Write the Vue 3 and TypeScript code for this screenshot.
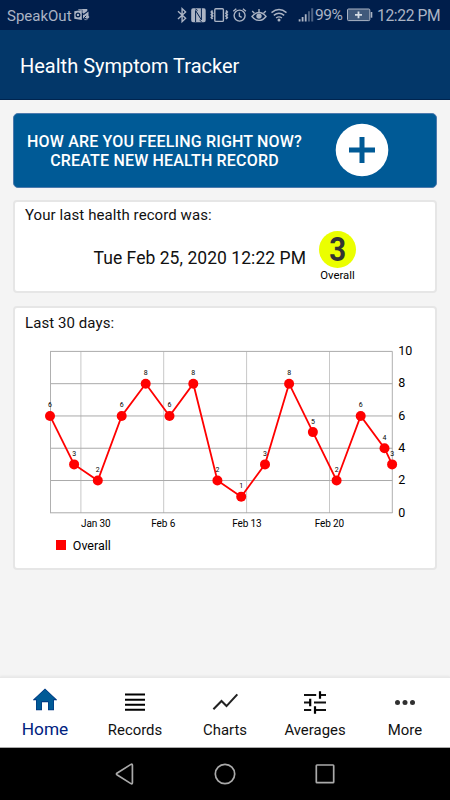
<script setup lang="ts">
interface Point { x: number; value: number }

const points: Point[] = [
  { x: 50, value: 6 }, { x: 74.1, value: 3 }, { x: 97.8, value: 2 }, { x: 121.7, value: 6 },
  { x: 145.7, value: 8 }, { x: 169.5, value: 6 }, { x: 193.3, value: 8 }, { x: 217.4, value: 2 },
  { x: 241.2, value: 1 }, { x: 265, value: 3 }, { x: 289.1, value: 8 }, { x: 312.9, value: 5 },
  { x: 336.6, value: 2 }, { x: 360.7, value: 6 }, { x: 384.5, value: 4 }, { x: 392.1, value: 3 },
]
const scaleY = (v: number): number => 512.8 - v * 16.14
const line = points.map((p) => `${p.x},${scaleY(p.value)}`).join(' ')
const levels = [0, 2, 4, 6, 8, 10]
const weeks = [
  { x: 80.9, labelX: 81, width: 29.5, label: 'Jan 30' },
  { x: 163.7, labelX: 151.3, width: 24, label: 'Feb 6' },
  { x: 246.6, labelX: 232.3, width: 29.3, label: 'Feb 13' },
  { x: 329.5, labelX: 314.8, width: 29.3, label: 'Feb 20' },
]
</script>

<template>
  <div class="phone">
    <div class="status">
      <span class="carrier">SpeakOut</span>
      <svg class="mail" width="16" height="30" viewBox="74 0 16 30">
        <path fill="#abb4c4" fill-rule="evenodd" d="M74.3 11.2l7.5-1.2v10l-7.5-1.2zM78 12.4a2.5 2.5 0 1 0 0 5 2.5 2.5 0 0 0 0-5zm0 1.3a1.2 1.2 0 1 1 0 2.4 1.2 1.2 0 0 1 0-2.4z" />
        <path fill="#abb4c4" d="M78.3 9h9v2l-3.6 2.8-1.3-1V9.8h-4.1zM83 14.4l.8.7 4.7-3.5v6.6H83z" />
        <path d="M84 16.4h4.7v1.2H87v2h-2.5" stroke="#abb4c4" fill="none" stroke-width="1" />
        <path d="M84.2 17.8l2-2M84.2 17.8l2.3 1.6" stroke="#001e4b" stroke-width="1" />
      </svg>
      <svg class="icon bluetooth" width="10" height="30" viewBox="177 0 10 30">
        <path d="M178 11.3l7.6 7-3.5 3.4V8.6l3.5 3.4-7.6 7" />
      </svg>
      <svg class="icon nfc" width="15" height="30" viewBox="191 0 15 30">
        <path stroke="none" fill="#abb4c4" d="M193 8.3h11q1.7 0 1.7 2v10q0 2-1.7 2h-11q-1.8 0-1.8-2v-10q0-2 1.8-2z" />
        <path stroke="#001e4b" stroke-width="1" d="M195.6 22V10.6l5.8 9.2V8.2" />
        <path stroke="#001e4b" stroke-width="1" d="M195.4 9l2.2 1.4M199.6 20.2l2 1.4" />
      </svg>
      <svg class="icon vibrate" width="19" height="30" viewBox="210 0 19 30">
        <rect x="214.8" y="8.8" width="8.6" height="12.6" rx="1" />
        <path d="M212.6 10.5l-1.2 1.4 1.2 1.4-1.2 1.4 1.2 1.4-1.2 1.4 1.2 1.5M226 10.5l1.2 1.4-1.2 1.4 1.2 1.4-1.2 1.4 1.2 1.4-1.2 1.5" stroke-width="1.8" />
      </svg>
      <svg class="icon alarm" width="15" height="30" viewBox="232 0 15 30">
        <circle cx="239.6" cy="15.6" r="5.5" />
        <path d="M239.4 12.5v3.6l2.3 1.3M233.3 11.3l3-2.5M245.9 11.3l-3-2.5" />
      </svg>
      <svg class="icon eye" width="17" height="30" viewBox="251 0 17 30">
        <path d="M252 16.5c4-5.3 10-5.3 14 0-4 5.2-10 5.2-14 0z" />
        <path d="M252.2 11l2.2 2.3M259 9v3.3M265.8 11l-2.2 2.3" />
        <circle cx="259" cy="16.1" r="2.7" fill="#abb4c4" stroke="none" />
      </svg>
      <svg class="icon wifi" width="17" height="30" viewBox="270 0 17 30">
        <path d="M271.5 12.6q7.5-6.4 15 0M273.8 15.4q5.2-4.3 10.4 0M276.1 18q2.9-2.3 5.8 0" />
        <circle cx="279" cy="20" r="1.5" fill="#abb4c4" stroke="none" />
      </svg>
      <svg class="signal" width="16" height="30" viewBox="298 0 16 30">
        <path fill="#abb4c4" d="M298.7 19.3h1.8v2.2h-1.8zM301.7 17h1.8v4.5h-1.8zM304.8 14.2h1.8v7.3h-1.8z" />
        <path fill="#4d6282" d="M308 11.2h1.9v10.3H308zM311.2 8.3h2v13.2h-2z" />
      </svg>
      <span class="percent">99%</span>
      <svg class="battery" width="26" height="30" viewBox="347 0 26 30">
        <rect x="347.5" y="9" width="22.3" height="11.6" rx="1" fill="#40597b" stroke="#abb4c4" />
        <path d="M371.5 12v5.7" stroke="#abb4c4" stroke-width="1.6" />
        <path d="M355 14.8h7M358.5 11.5v6.7" stroke="#d6dde5" stroke-width="1.8" />
      </svg>
      <span class="clock">12:22 PM</span>
    </div>

    <header class="header"><h1>Health Symptom Tracker</h1></header>

    <main class="content">
      <button class="create">
        <span class="prompt">HOW ARE YOU FEELING RIGHT NOW?<br />CREATE NEW HEALTH RECORD</span>
        <svg class="plus" width="54" height="54" viewBox="0 0 54 54">
          <circle cx="27" cy="27" r="26.3" fill="#fff" />
          <path d="M14 27h26M27 14v26" stroke="#005a96" stroke-width="5" />
        </svg>
      </button>

      <section class="card last">
        <h2>Your last health record was:</h2>
        <div class="record">
          <span class="date">Tue Feb 25, 2020 12:22 PM</span>
          <div class="rating">
            <div class="score"><span>3</span></div>
            <span class="caption">Overall</span>
          </div>
        </div>
      </section>

      <section class="card history">
        <h2>Last 30 days:</h2>
        <svg class="chart" width="420" height="202" viewBox="15 335 420 202">
          <path v-for="w in weeks" :key="w.label" :d="`M${w.x} 351.5V513`" stroke="#c8c8c8" />
          <path v-for="v in levels" :key="v" :d="`M50 ${scaleY(v)}H392.5`" stroke="#aaa" />
          <path d="M50.5 351.5V513M392.3 351.5V513" stroke="#b0b0b0" />
          <polyline :points="line" fill="none" stroke="#f00" stroke-width="1.8" />
          <circle v-for="p in points" :key="p.x" :cx="p.x" :cy="scaleY(p.value)" r="5" fill="#f00" />
          <text v-for="p in points" :key="p.x" class="value" :x="p.x" :y="scaleY(p.value) - 8.6">{{ p.value }}</text>
          <text v-for="v in levels" :key="v" class="level" x="398.3" :y="scaleY(v) + 3.8">{{ v }}</text>
          <text v-for="w in weeks" :key="w.label" class="week" :x="w.labelX" y="527.2" :textLength="w.width">{{ w.label }}</text>
        </svg>
        <div class="legend"><i></i><span>Overall</span></div>
      </section>
    </main>

    <nav class="tabs">
      <a class="tab active">
        <svg width="30" height="30" viewBox="0 0 30 30"><path fill="#00337f" d="M3 14.7L15 3.5l12 11.2v.5h-3v10h-6v-8h-6v8H6v-10H3z" /><path fill="#005a96" d="M4.5 14.3L15 4.2l10.5 10.1h-2.1v10.2H18.6v-8.2H11.4v8.2H6.6V14.3z" /></svg>
        <span>Home</span>
      </a>
      <a class="tab">
        <svg width="30" height="30" viewBox="0 0 30 30"><path d="M5 9.6h20M5 14.8h20M5 19.8h20M5 24.8h20" stroke="#000" stroke-width="2" /></svg>
        <span>Records</span>
      </a>
      <a class="tab">
        <svg width="30" height="30" viewBox="0 0 30 30"><path d="M3.4 24.2l8.1-8.1 5 5L27.3 9.4" fill="none" stroke="#222" stroke-width="2.1" /></svg>
        <span>Charts</span>
      </a>
      <a class="tab">
        <svg width="30" height="30" viewBox="0 0 30 30"><path d="M4 10h12.2M19 10h7M4 17.5h6.8M14 17.5h12M4 25h7.2M14.2 25H26" stroke="#111" stroke-width="2" /><path d="M20 6.2v7.6M10.2 13.7v7.6M15 21.2v7.5" stroke="#000" stroke-width="2.2" /></svg>
        <span>Averages</span>
      </a>
      <a class="tab">
        <svg width="30" height="30" viewBox="0 0 30 30"><g fill="#303030"><circle cx="7.5" cy="17.5" r="2.5" /><circle cx="15" cy="17.5" r="2.5" /><circle cx="22.5" cy="17.5" r="2.5" /></g></svg>
        <span>More</span>
      </a>
    </nav>

    <div class="system">
      <svg width="24" height="24" viewBox="0 0 24 24"><path d="M3.9 11.2q-.9.8 0 1.5l14 8.9q1.5.7 1.5-.8V3.2q0-1.5-1.5-.8z" /></svg>
      <svg width="24" height="24" viewBox="0 0 24 24"><circle cx="12" cy="12" r="9.7" /></svg>
      <svg width="24" height="24" viewBox="0 0 24 24"><rect x="3.3" y="3" width="17.4" height="17.6" rx=".7" /></svg>
    </div>
  </div>
</template>

<style>
body { margin: 0; }
</style>

<style scoped>
.phone {
  width: 450px;
  height: 800px;
  display: flex;
  flex-direction: column;
  overflow: hidden;
  background: #f4f4f4;
  font-family: Roboto, "Liberation Sans", sans-serif;
  color: #111;
}
.phone * { box-sizing: border-box; }
svg { display: block; flex: none; }
.status {
  height: 30px;
  flex: none;
  display: flex;
  align-items: center;
  padding-left: 7px;
  background: #001e4b;
  color: #abb4c4;
  font-size: 15px;
  line-height: 30px;
  white-space: nowrap;
}
.status span { height: 30px; padding-top: 1px; }
.carrier { width: 67px; }
.icon { fill: none; stroke: #abb4c4; stroke-width: 1.4; }
.bluetooth { margin-left: 87px; }
.nfc { margin-left: 4px; }
.vibrate { margin-left: 4px; }
.alarm { margin-left: 3px; }
.eye { margin-left: 4px; }
.wifi { margin-left: 2px; }
.signal { margin-left: 11px; }
.status .percent { width: 32px; margin-left: 1px; font-size: 15.5px; letter-spacing: -.5px; padding-top: 0; }
.clock { margin-left: 4px; font-size: 15.6px; letter-spacing: -.35px; }
.header {
  height: 70px;
  flex: none;
  display: flex;
  align-items: center;
  padding: 2px 20px 0;
  background: #033769;
  border-bottom: 1px solid #00244f;
  color: #fff;
}
.header h1 { margin: 0; font-size: 20px; font-weight: 400; line-height: 24px; white-space: nowrap; }
.content { flex: 1; padding: 12.5px 13px 0 12.5px; display: flex; flex-direction: column; }
.create {
  height: 75px;
  flex: none;
  display: flex;
  align-items: center;
  padding: 0;
  border: 1px solid #4c7aad;
  border-radius: 5px;
  background: #005a96;
  color: #fff;
  font-family: inherit;
}
.prompt { width: 276px; margin-left: 13px; padding-top: 1px; text-align: center; font-size: 16px; line-height: 19px; font-weight: 500; letter-spacing: .18px; white-space: nowrap; }
.plus { margin-left: 32.5px; margin-top: -1px; }
.card {
  flex: none;
  border: 2px solid #e6e6e6;
  border-radius: 4px;
  background: #fff;
}
.card h2 { margin: 0; padding-left: 10.5px; font-size: 15px; line-height: 18px; font-weight: 400; letter-spacing: .08px; }
.last { height: 93px; margin-top: 12.5px; padding-top: 4px; }
.record { display: flex; align-items: flex-start; padding-left: 79px; }
.date { width: 213px; padding-top: 22px; font-size: 17.5px; line-height: 24px; letter-spacing: .05px; white-space: nowrap; }
.rating { width: 50px; margin-left: 6px; padding-top: 6.5px; display: flex; flex-direction: column; align-items: center; }
.score { width: 37.5px; height: 37.5px; border-radius: 50%; background: #ebff00; color: #333; text-align: center; font-size: 33px; line-height: 38px; font-weight: 700; }
.score span { display: block; transform: scaleX(.89); }
.caption { margin-top: 1px; font-size: 11.3px; line-height: 14px; color: #000; }
.history { height: 264px; margin-top: 13px; padding-top: 6px; }
.chart { margin-top: 2.5px; overflow: visible; }
.chart text { fill: #000; }
.value { font-size: 7px; text-anchor: middle; }
.level { font-size: 12.5px; }
.week { font-size: 10px; }
.legend { display: flex; align-items: center; gap: 7px; padding-left: 41.3px; font-size: 12.5px; line-height: 17px; color: #000; }
.legend i { width: 10px; height: 10px; background: #f00; }
.tabs {
  height: 71px;
  flex: none;
  display: grid;
  grid-template-columns: repeat(5, 1fr);
  border-top: 1px solid #e8e8e8;
  border-bottom: 1px solid #aaa;
  background: #fff;
  box-shadow: 0 -1px 2px #e6e6e6;
}
.tab { display: flex; flex-direction: column; align-items: center; padding-top: 7px; font-size: 14.9px; line-height: 20px; }
.tab span { margin-top: 5px; }
.active { color: #00227f; font-size: 17.3px; }
.active span { margin-top: 4px; }
.system {
  height: 52px;
  flex: none;
  display: flex;
  justify-content: center;
  align-items: center;
  gap: 76px;
  background: #000;
}
.system svg { fill: none; stroke: #aaa; stroke-width: 1.7; }
</style>
